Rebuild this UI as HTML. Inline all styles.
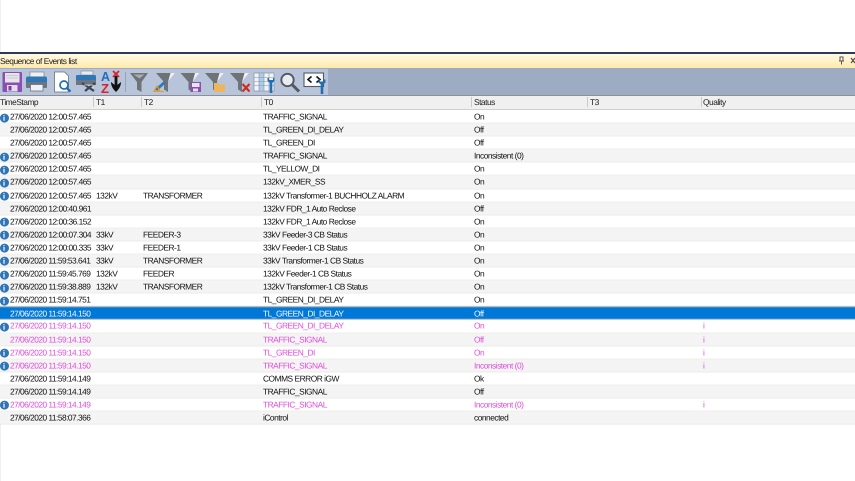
<!DOCTYPE html>
<html><head><meta charset="utf-8">
<style>
html,body{margin:0;padding:0;background:#fff;width:855px;height:481px;overflow:hidden}
body{position:relative;font-family:"Liberation Sans",sans-serif;font-size:8.4px;color:#111;text-rendering:geometricPrecision}
.a{position:absolute}
#w{position:absolute;left:0;top:.6px;width:855px;height:470px}
.r{position:absolute;left:0;width:855px;height:13.09px;line-height:13px;white-space:nowrap;box-sizing:border-box;border-bottom:1px solid #ecece6;background:#fff}
.g{background:#f4f4f4}
.r span,.h span{position:absolute;top:0;letter-spacing:-.49px;filter:blur(.25px)}
.r span.c1{letter-spacing:-.53px}
.p{color:#e04fdc}
.s{background:#0078d7;color:#f4f9ff;border-top:1px solid #6f8fa8;border-bottom:1px solid #7f9fb8}
.c1{left:10px}.c2{left:96px}.c3{left:143px}.c4{left:263px}.c5{left:474px}.c6{left:703px}
.i{position:absolute;left:-.5px;top:2.5px;width:9px;height:9px;border-radius:50%;background:#2f74b5;color:#fff;font:bold 8px/9px "Liberation Serif",serif;text-align:center}
.h{position:absolute;left:0;top:96px;width:855px;height:14px;background:#f0f0f0;border-bottom:1px solid #cfcfcf;box-sizing:border-box;line-height:12px;color:#222}
.h b{position:absolute;top:1px;width:1px;height:10px;background:#c9c9c9}
</style></head><body>
<div class="a" style="left:0;top:0;width:1px;height:481px;background:#eef0f4"></div>
<div class="a" style="left:0;top:52px;width:855px;height:2px;background:#2b3a57"></div>
<div class="a" style="left:0;top:54px;width:855px;height:14px;background:linear-gradient(#fff8e4,#fff3c8 50%,#ffe9ac)"></div>
<div class="a" style="left:0;top:55px;line-height:12px;color:#1a1a1a;letter-spacing:-.47px;filter:blur(.25px)">Sequence of Events list</div>
<svg class="a" style="left:836px;top:55px" width="19" height="12" viewBox="0 0 19 12"><path d="M4 2h3v4h-3zM3 6h5M5.500 6v3.500" fill="none" stroke="#555" stroke-width="1"/><path d="M15 3l4 5M19 3l-4 5" stroke="#444" stroke-width="1.100" fill="none"/></svg>
<div class="a" style="left:0;top:68px;width:855px;height:28px;background:#9dabc3;border-bottom:1px solid #8a8f98;box-sizing:border-box"></div>
<div class="a" style="left:0;top:69px;width:328px;height:26px;background:#b7c4d9"></div>
<svg class="a" style="left:0;top:68px" width="335" height="28" viewBox="0 0 335 28">
<!-- save -->
<rect x="2.500" y="4" width="19.500" height="20" rx="1" fill="#8a4fb0"/><rect x="5" y="5" width="14.500" height="9.500" fill="#e6e6ea"/><path d="M6 7.500h12M6 10h12" stroke="#c8c8d0"/><rect x="7" y="17" width="10.500" height="6.500" fill="#e4dcec"/><rect x="8.500" y="18" width="3" height="4.500" fill="#7a3fa0"/>
<!-- printer -->
<rect x="30" y="4" width="14" height="6" fill="#eef0f4" stroke="#7d8795" stroke-width=".7"/><rect x="26" y="8.500" width="21" height="8" rx="2" fill="#2f77b5"/><rect x="26" y="14" width="21" height="6" rx="1" fill="#6c7683"/><rect x="30.500" y="16.500" width="12.500" height="6.500" fill="#f0f2f6" stroke="#6c7683" stroke-width=".8"/>
<!-- preview -->
<path d="M54.500 4h10l4 4v16h-14z" fill="#fff" stroke="#66707c" stroke-width=".8"/><circle cx="64" cy="17" r="4" fill="#fff" stroke="#1f6fb5" stroke-width="1.700"/><path d="M66.500 20l4 3.500" stroke="#1f6fb5" stroke-width="2.200"/>
<!-- print settings -->
<rect x="81" y="3" width="12" height="4" fill="#e8ebf0" stroke="#7d8795" stroke-width=".6"/><rect x="76" y="7" width="20" height="8" rx="1.500" fill="#2f77b5"/><rect x="76" y="12" width="20" height="5" fill="#6c7683"/><path d="M82 15l12 8M95 15l-10 8" stroke="#3d4550" stroke-width="2.200"/><path d="M84 17h9v3" stroke="#e6e8ee" stroke-width=".8" fill="none"/>
<!-- AZ anchor -->
<text x="101" y="13" font-family="Liberation Sans" font-size="13" font-weight="bold" fill="#1f6fc0" textLength="9" lengthAdjust="spacingAndGlyphs">A</text><text x="101" y="25" font-family="Liberation Sans" font-size="13" font-weight="bold" fill="#d8232a" textLength="8" lengthAdjust="spacingAndGlyphs">Z</text>
<path d="M113 3l6 6M119 3l-6 6" stroke="#d8232a" stroke-width="1.800"/><path d="M116 8v13" stroke="#111" stroke-width="2.800"/><path d="M111 14c0 4 2 7 5 10 3-3 5-6 5-10l-5 4z" fill="#111"/>
<path d="M125.500 4v20" stroke="#98a3b5"/>
<!-- filter -->
<path d="M130 5h18l-6.500 9v10l-4.500-2.500v-7.500z" fill="#6f7378"/><path d="M133.500 6.500h11l-5 4z" fill="#a9adb3"/>
<!-- filter pencil -->
<path d="M156 5h19l-7 9v10l-4-2.500v-7.500z" fill="#6f7378"/><path d="M170.500 5h4.500l-7 9z" fill="#eef0f4"/><path d="M155 21l9-8 2 2-9 8z" fill="#2f77b5"/><path d="M154 23l3-5 3 5z" fill="none" stroke="#e69a2e" stroke-width="1.200"/><path d="M154 23.500h10" stroke="#e69a2e"/>
<!-- filter save -->
<path d="M180.500 5h19l-7 9v10l-4-2.500v-7.500z" fill="#6f7378"/><path d="M195 5h4.500l-7 9z" fill="#eef0f4"/><rect x="190.500" y="14" width="10.500" height="10" fill="#8a4fb0"/><rect x="192" y="15" width="7.500" height="4" fill="#e6e6ea"/><rect x="193" y="20.500" width="5" height="3" fill="#e4dcec"/>
<!-- filter open -->
<path d="M205 5h19l-7 9v10l-4-2.500v-7.500z" fill="#6f7378"/><path d="M219.500 5h4.500l-7 9z" fill="#eef0f4"/><path d="M214 15h4l1 1.500h6v7.500h-11z" fill="#eeb65a"/>
<!-- filter x -->
<path d="M230 5h19l-7 9v10l-4-2.500v-7.500z" fill="#6f7378"/><path d="M244.500 5h4.500l-7 9z" fill="#eef0f4"/><path d="M242.500 16l7 7.500M249.500 16l-7 7.500" stroke="#d02a20" stroke-width="2.100"/>
<!-- table wrench -->
<rect x="254" y="5" width="20" height="18" fill="#f0f3f7" stroke="#8a93a0" stroke-width=".7"/><rect x="259" y="5.500" width="5" height="17" fill="#a9cdea"/><path d="M254 9.500h20M254 13.500h20M254 17.500h20M259 5v18M264 5v18M269 5v18" stroke="#8a93a0" stroke-width=".6"/><path d="M271 13v12" stroke="#1f6fb5" stroke-width="2.600"/><path d="M267.500 10v3l3.500 3 3.500-3v-3l-1.500 0v2h-4v-2z" fill="#1f6fb5"/>
<!-- magnifier -->
<circle cx="287.500" cy="12" r="6.200" fill="#e9edf3" stroke="#55595f" stroke-width="1.900"/><path d="M292 16.500l7 7" stroke="#55595f" stroke-width="3"/>
<!-- code wrench -->
<rect x="304" y="5" width="19.500" height="13.500" fill="#fbfcfe" stroke="#555b64" stroke-width="1.100"/><path d="M311.500 8.500l-3.500 3 3.500 3M316.500 8.500l3.500 3-3.500 3" fill="none" stroke="#111" stroke-width="1.600"/><path d="M322 15v11" stroke="#1f6fb5" stroke-width="2.600"/><path d="M318.500 11.500v3l3.500 3 3.500-3v-3l-1.500 0v2h-4v-2z" fill="#1f6fb5"/>
</svg>
<div class="h">
<span style="left:0">TimeStamp</span><b style="left:93px"></b>
<span style="left:96px">T1</span><b style="left:141px"></b>
<span style="left:144px">T2</span><b style="left:261px"></b>
<span style="left:264px">T0</span><b style="left:471px"></b>
<span style="left:474px">Status</span><b style="left:587px"></b>
<span style="left:590px">T3</span><b style="left:701px"></b>
<span style="left:703px">Quality</span>
</div>
<div id="w" style="top:0;transform:translateY(.6px)">
<div class="r" style="top:110px"><div class="i">i</div><span class="c1">27/06/2020 12:00:57.465</span><span class="c4">TRAFFIC_SIGNAL</span><span class="c5">On</span></div>
<div class="r g" style="top:123.090px"><span class="c1">27/06/2020 12:00:57.465</span><span class="c4">TL_GREEN_DI_DELAY</span><span class="c5">Off</span></div>
<div class="r" style="top:136.180px"><span class="c1">27/06/2020 12:00:57.465</span><span class="c4">TL_GREEN_DI</span><span class="c5">Off</span></div>
<div class="r g" style="top:149.270px"><div class="i">i</div><span class="c1">27/06/2020 12:00:57.465</span><span class="c4">TRAFFIC_SIGNAL</span><span class="c5">Inconsistent (0)</span></div>
<div class="r" style="top:162.360px"><div class="i">i</div><span class="c1">27/06/2020 12:00:57.465</span><span class="c4">TL_YELLOW_DI</span><span class="c5">On</span></div>
<div class="r g" style="top:175.450px"><div class="i">i</div><span class="c1">27/06/2020 12:00:57.465</span><span class="c4">132kV_XMER_SS</span><span class="c5">On</span></div>
<div class="r" style="top:188.540px"><div class="i">i</div><span class="c1">27/06/2020 12:00:57.465</span><span class="c2">132kV</span><span class="c3">TRANSFORMER</span><span class="c4">132kV Transformer-1 BUCHHOLZ ALARM</span><span class="c5">On</span></div>
<div class="r g" style="top:201.630px"><span class="c1">27/06/2020 12:00:40.961</span><span class="c4">132kV FDR_1 Auto Reclose</span><span class="c5">Off</span></div>
<div class="r" style="top:214.720px"><div class="i">i</div><span class="c1">27/06/2020 12:00:36.152</span><span class="c4">132kV FDR_1 Auto Reclose</span><span class="c5">On</span></div>
<div class="r g" style="top:227.810px"><div class="i">i</div><span class="c1">27/06/2020 12:00:07.304</span><span class="c2">33kV</span><span class="c3">FEEDER-3</span><span class="c4">33kV Feeder-3 CB Status</span><span class="c5">On</span></div>
<div class="r" style="top:240.900px"><div class="i">i</div><span class="c1">27/06/2020 12:00:00.335</span><span class="c2">33kV</span><span class="c3">FEEDER-1</span><span class="c4">33kV Feeder-1 CB Status</span><span class="c5">On</span></div>
<div class="r g" style="top:253.990px"><div class="i">i</div><span class="c1">27/06/2020 11:59:53.641</span><span class="c2">33kV</span><span class="c3">TRANSFORMER</span><span class="c4">33kV Transformer-1 CB Status</span><span class="c5">On</span></div>
<div class="r" style="top:267.080px"><div class="i">i</div><span class="c1">27/06/2020 11:59:45.769</span><span class="c2">132kV</span><span class="c3">FEEDER</span><span class="c4">132kV Feeder-1 CB Status</span><span class="c5">On</span></div>
<div class="r g" style="top:280.170px"><div class="i">i</div><span class="c1">27/06/2020 11:59:38.889</span><span class="c2">132kV</span><span class="c3">TRANSFORMER</span><span class="c4">132kV Transformer-1 CB Status</span><span class="c5">On</span></div>
<div class="r" style="top:293.260px"><div class="i">i</div><span class="c1">27/06/2020 11:59:14.751</span><span class="c4">TL_GREEN_DI_DELAY</span><span class="c5">On</span></div>
<div class="r s" style="top:306.350px;line-height:12px"><span class="c1">27/06/2020 11:59:14.150</span><span class="c4">TL_GREEN_DI_DELAY</span><span class="c5">Off</span></div>
<div class="r p" style="top:319.440px"><div class="i">i</div><span class="c1">27/06/2020 11:59:14.150</span><span class="c4">TL_GREEN_DI_DELAY</span><span class="c5">On</span><span class="c6">i</span></div>
<div class="r g p" style="top:332.530px"><span class="c1">27/06/2020 11:59:14.150</span><span class="c4">TRAFFIC_SIGNAL</span><span class="c5">Off</span><span class="c6">i</span></div>
<div class="r p" style="top:345.620px"><div class="i">i</div><span class="c1">27/06/2020 11:59:14.150</span><span class="c4">TL_GREEN_DI</span><span class="c5">On</span><span class="c6">i</span></div>
<div class="r g p" style="top:358.710px"><div class="i">i</div><span class="c1">27/06/2020 11:59:14.150</span><span class="c4">TRAFFIC_SIGNAL</span><span class="c5">Inconsistent (0)</span><span class="c6">i</span></div>
<div class="r" style="top:371.800px"><span class="c1">27/06/2020 11:59:14.149</span><span class="c4">COMMS ERROR iGW</span><span class="c5">Ok</span></div>
<div class="r g" style="top:384.890px"><span class="c1">27/06/2020 11:59:14.149</span><span class="c4">TRAFFIC_SIGNAL</span><span class="c5">Off</span></div>
<div class="r p" style="top:397.980px"><div class="i">i</div><span class="c1">27/06/2020 11:59:14.149</span><span class="c4">TRAFFIC_SIGNAL</span><span class="c5">Inconsistent (0)</span><span class="c6">i</span></div>
<div class="r g" style="top:411.070px"><span class="c1">27/06/2020 11:58:07.366</span><span class="c4">iControl</span><span class="c5">connected</span></div>
</div>
</body></html>
